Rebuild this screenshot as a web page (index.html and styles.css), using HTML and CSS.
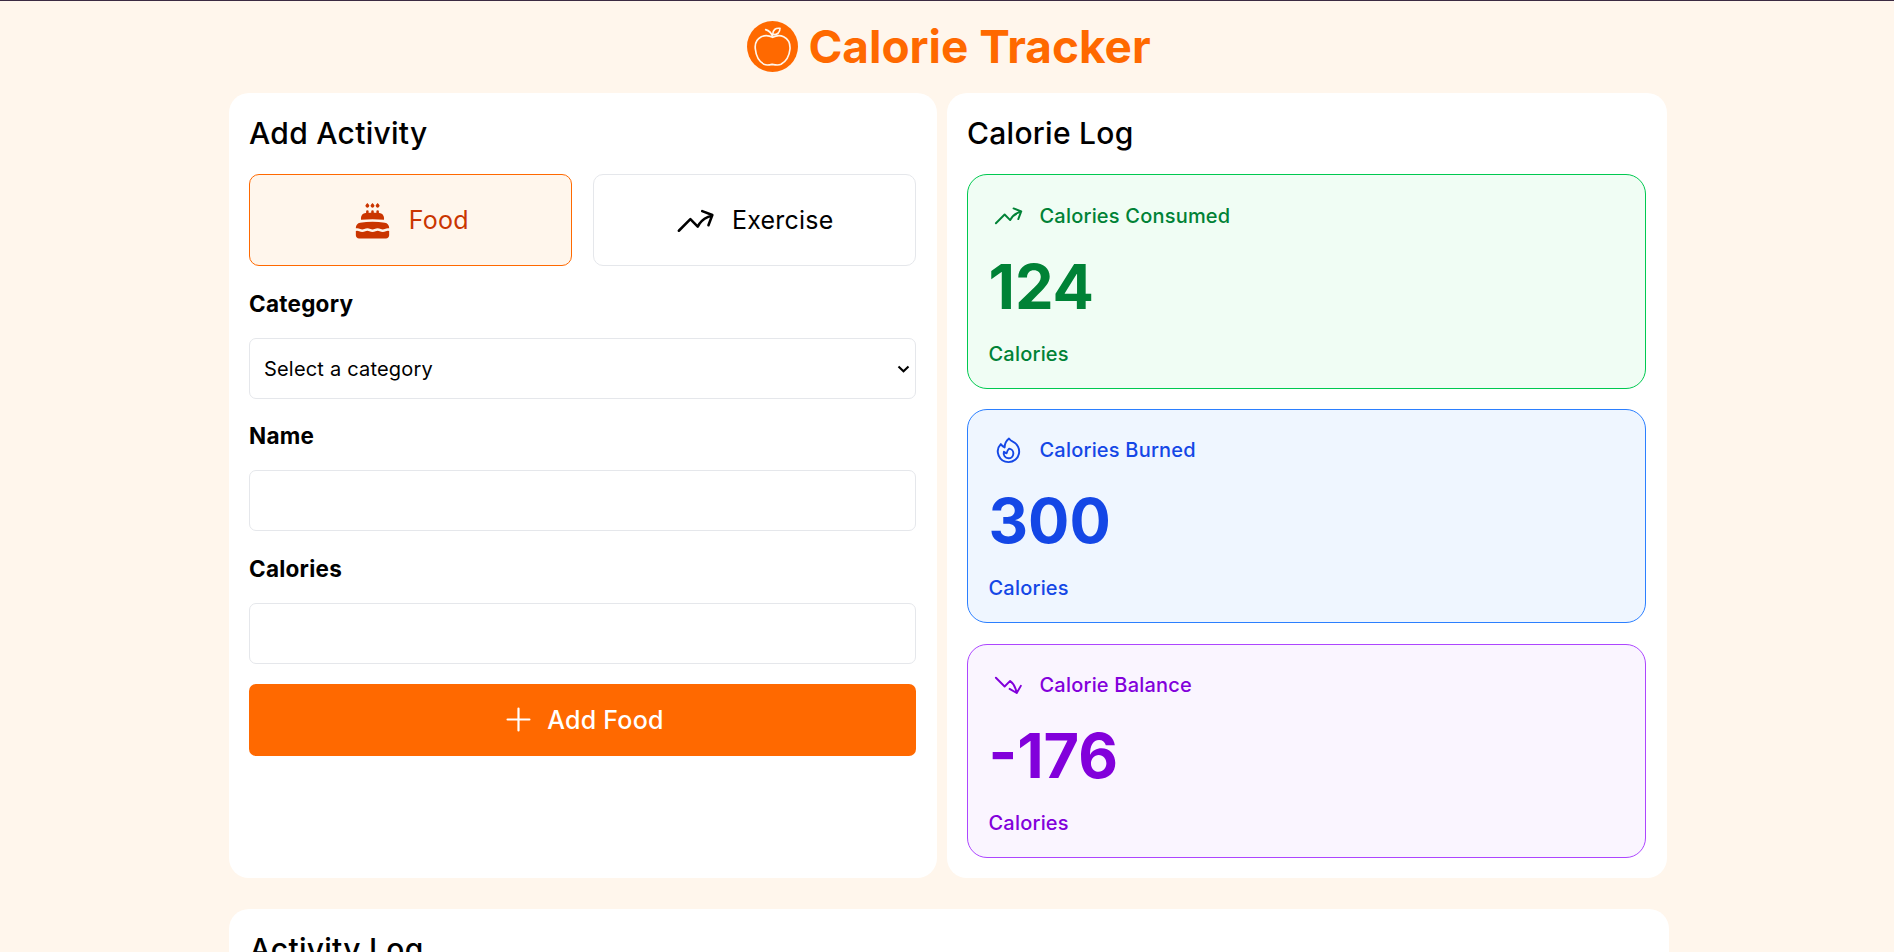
FILE: index.html
```html
<!DOCTYPE html>
<html lang="en">
<head>
<meta charset="utf-8">
<title>Calorie Tracker</title>
<link rel="stylesheet" href="styles.css">
</head>
<body>
<header class="header">
  <svg class="logo" viewBox="0 0 153 153">
    <circle class="logo-disc" cx="76.500" cy="76.500" r="76.500"/>
    <path class="logo-line" d="M77 49C66 43 54 42 43 47C29 54 23 68 25 84C27 104 37 122 51 130C59 134 67 132 76 130C85 132 94 134 102 130C116 122 127 104 129 84C130 68 124 54 110 47C99 42 88 43 77 49Z"/>
    <path class="logo-line" d="M76 45C73 36 66 29 56 26M77 41C77 27 86 20 99 22C99 35 91 42 77 41Z"/>
  </svg>
  <h1 class="title">Calorie Tracker</h1>
</header>
<main class="page">
  <div class="columns">
    <section class="card add">
      <h2 class="heading">Add Activity</h2>
      <div class="tabs">
        <button class="tab tab-active">
          <svg class="tab-icon solid" viewBox="0 0 24 24"><path d="m15 1.784-.796.795a1.125 1.125 0 1 0 1.591 0L15 1.784ZM12 1.784l-.796.795a1.125 1.125 0 1 0 1.591 0L12 1.784ZM9 1.784l-.796.795a1.125 1.125 0 1 0 1.591 0L9 1.784ZM9.750 7.547c.498-.021.998-.035 1.500-.042V6.750a.75.75 0 0 1 1.500 0v.755c.502.007 1.002.021 1.500.042V6.750a.75.75 0 0 1 1.500 0v.88l.307.022c1.550.117 2.693 1.427 2.693 2.946v1.018a62.182 62.182 0 0 0-13.500 0v-1.018c0-1.519 1.143-2.829 2.693-2.946l.307-.022v-.88a.75.75 0 0 1 1.500 0v.797ZM12 12.750c-2.472 0-4.900.184-7.274.54-1.454.217-2.476 1.482-2.476 2.916v.384a4.104 4.104 0 0 1 2.585.364 2.605 2.605 0 0 0 2.330 0 4.104 4.104 0 0 1 3.670 0 2.605 2.605 0 0 0 2.330 0 4.104 4.104 0 0 1 3.670 0 2.605 2.605 0 0 0 2.330 0 4.104 4.104 0 0 1 2.585-.364v-.384c0-1.434-1.022-2.700-2.476-2.917A49.138 49.138 0 0 0 12 12.750ZM21.750 18.131a2.604 2.604 0 0 0-1.915.165 4.104 4.104 0 0 1-3.670 0 2.605 2.605 0 0 0-2.330 0 4.104 4.104 0 0 1-3.670 0 2.605 2.605 0 0 0-2.330 0 4.104 4.104 0 0 1-3.670 0 2.604 2.604 0 0 0-1.915-.165v2.494c0 1.035.84 1.875 1.875 1.875h15.750c1.035 0 1.875-.84 1.875-1.875v-2.494Z"/></svg>
          <span>Food</span>
        </button>
        <button class="tab">
          <svg class="tab-icon line" viewBox="0 0 24 24"><path d="M2.250 18 9 11.250l4.306 4.306a11.950 11.950 0 0 1 5.814-5.518l2.740-1.220m0 0-5.940-2.281m5.940 2.280-2.280 5.941"/></svg>
          <span>Exercise</span>
        </button>
      </div>
      <div class="label">Category</div>
      <div class="field select">
        <span>Select a category</span>
        <svg class="chevron" viewBox="0 0 13 8"><path d="M1.500 1.500 6.500 6.200 11.500 1.500"/></svg>
      </div>
      <div class="label">Name</div>
      <div class="field"></div>
      <div class="label">Calories</div>
      <div class="field"></div>
      <button class="submit">
        <svg class="submit-icon line" viewBox="0 0 24 24"><path d="M12 4.500v15m7.500-7.500h-15"/></svg>
        <span>Add Food</span>
      </button>
    </section>
    <section class="card log">
      <h2 class="heading">Calorie Log</h2>
      <div class="stats">
        <article class="stat green">
          <div class="stat-title"><svg class="stat-icon line" viewBox="0 0 24 24"><path d="M2.250 18 9 11.250l4.306 4.306a11.950 11.950 0 0 1 5.814-5.518l2.740-1.220m0 0-5.940-2.281m5.940 2.280-2.280 5.941"/></svg><span>Calories Consumed</span></div>
          <div class="stat-value">124</div>
          <div class="stat-unit">Calories</div>
        </article>
        <article class="stat blue">
          <div class="stat-title"><svg class="stat-icon line" viewBox="0 0 24 24"><path d="M15.362 5.214A8.252 8.252 0 0 1 12 21 8.250 8.250 0 0 1 6.038 7.047 8.287 8.287 0 0 0 9 9.601a8.983 8.983 0 0 1 3.361-6.867 8.210 8.210 0 0 0 3 2.480Z"/><path d="M12 18a3.750 3.750 0 0 0 .495-7.468 5.990 5.990 0 0 0-1.925 3.547 5.975 5.975 0 0 1-2.133-1.001A3.750 3.750 0 0 0 12 18Z"/></svg><span>Calories Burned</span></div>
          <div class="stat-value">300</div>
          <div class="stat-unit">Calories</div>
        </article>
        <article class="stat purple">
          <div class="stat-title"><svg class="stat-icon line" viewBox="0 0 24 24"><path d="M2.250 6 9 12.750l4.286-4.286a11.948 11.948 0 0 1 4.306 6.430l.776 2.898m0 0 3.182-5.511m-3.182 5.510-5.511-3.181"/></svg><span>Calorie Balance</span></div>
          <div class="stat-value">-176</div>
          <div class="stat-unit">Calories</div>
        </article>
      </div>
    </section>
  </div>
  <section class="card activity">
    <h2 class="heading">Activity Log</h2>
  </section>
</main>
</body>
</html>
```

FILE: styles.css
```css
* { box-sizing: border-box; }
body {
  margin: 0;
  height: 952px;
  overflow: hidden;
  background: #fff6ec;
  color: #000;
  font-family: Inter, "Liberation Sans", sans-serif;
  font-size: 20px;
}
h1, h2 { margin: 0; }
button { font: inherit; color: inherit; margin: 0; }
svg { flex: none; display: block; }
.header {
  height: 93px;
  border-top: 1px solid #3b2a42;
  padding-top: 20px;
  padding-left: 4px;
  display: flex;
  justify-content: center;
  align-items: flex-start;
  gap: 10px;
}
.logo { width: 51px; height: 51px; }
.logo-disc { fill: #ff6900; }
.logo-line { fill: none; stroke: #fff6ec; stroke-width: 5; stroke-linejoin: round; stroke-linecap: round; }
.title { font-size: 45.9px; font-weight: 700; line-height: 51px; color: #ff6900; }
.page { width: 1440px; margin-left: 229px; }
.columns { display: flex; gap: 10px; width: 1438px; }
.card { background: #fff; border-radius: 20px; padding: 20px; }
.add { width: 708px; height: 785px; padding-right: 21px; }
.log { width: 720px; padding-right: 21px; }
.heading { font-size: 30px; font-weight: 500; line-height: 40px; letter-spacing: 0.28px; margin-bottom: 21px; }
.tabs { display: grid; grid-template-columns: 323px 323px; gap: 21px; margin-bottom: 19.8px; }
.tab {
  height: 92px;
  display: flex;
  align-items: center;
  justify-content: center;
  gap: 15.5px;
  border: 1px solid #e5e7eb;
  border-radius: 10px;
  background: #fff;
  font-size: 25px;
  letter-spacing: 0.22px;
}
.tab-active { background: #fff6ec; border-color: #ff6900; color: #ca3500; }
.tab-icon { width: 41px; height: 41px; }
.line { fill: none; stroke: currentColor; stroke-width: 1.5; stroke-linecap: round; stroke-linejoin: round; }
.solid { fill: currentColor; }
.label { font-size: 22.5px; font-weight: 700; line-height: 35px; letter-spacing: 0.25px; margin-bottom: 17px; }
.field {
  height: 61px;
  border: 1px solid #e5e7eb;
  border-radius: 7px;
  margin-bottom: 19.5px;
}
.select {
  display: flex;
  align-items: center;
  justify-content: space-between;
  padding: 1px 5px 0 14px;
  letter-spacing: 0.19px;
}
.field:has(+ .submit) { margin-bottom: 20.2px; }
.chevron { width: 13px; height: 8px; fill: none; stroke: #000; stroke-width: 2.1; }
.submit {
  width: 100%;
  height: 72px;
  border: 0;
  border-radius: 7px;
  background: #ff6900;
  color: #fff;
  font-size: 25px;
  font-weight: 500;
  letter-spacing: 0.22px;
  display: flex;
  align-items: center;
  justify-content: center;
  gap: 11px;
}
.submit-icon { width: 35px; height: 35px; }
.stats { display: grid; gap: 20.2px; }
.stat {
  height: 214.6px;
  border: 1px solid;
  border-radius: 20px;
  padding: 20px 20px 0 20.5px;
}
.stat-title { display: flex; align-items: center; gap: 15.5px; height: 41px; padding-left: 4.5px; font-weight: 500; letter-spacing: 0.2px; }
.stat-icon { width: 31px; height: 31px; }
.stat-value { font-size: 61.3px; font-weight: 700; line-height: 75px; margin-top: 13.6px; }
.stat-unit { font-weight: 500; line-height: 30px; letter-spacing: 0.2px; margin-top: 14px; }
.green { background: #f0fdf4; border-color: #00c950; color: #008236; }
.blue { background: #eff6ff; border-color: #2b7fff; color: #1447e6; }
.purple { background: #faf5ff; border-color: #ad46ff; color: #8200db; }
.activity { margin-top: 31px; height: 43px; padding: 20px 20.5px 0; border-radius: 20px 20px 0 0; }
```
